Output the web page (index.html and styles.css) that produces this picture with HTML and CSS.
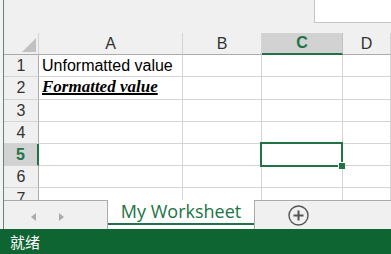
FILE: index.html
```html
<!DOCTYPE html>
<html lang="zh">
<head>
    <meta charset="UTF-8">
    <title>My Worksheet</title>
    <link rel="stylesheet" href="styles.css">
</head>
<body>
    <div class="app">
        <div class="main">
            <div class="edge"></div>
            <div class="content">
                <div class="ribbon">
                    <div class="namebox"></div>
                </div>

                <div class="sheet">
                    <div class="corner"><span class="tri"></span></div>
                    <div class="col-head">A</div>
                    <div class="col-head">B</div>
                    <div class="col-head active">C</div>
                    <div class="col-head">D</div>

                    <div class="row-head">1</div>
                    <div class="cell plain">Unformatted value</div>
                    <div class="cell"></div>
                    <div class="cell"></div>
                    <div class="cell"></div>

                    <div class="row-head">2</div>
                    <div class="cell fancy">Formatted value</div>
                    <div class="cell"></div>
                    <div class="cell"></div>
                    <div class="cell"></div>

                    <div class="row-head">3</div>
                    <div class="cell"></div>
                    <div class="cell"></div>
                    <div class="cell"></div>
                    <div class="cell"></div>

                    <div class="row-head">4</div>
                    <div class="cell"></div>
                    <div class="cell"></div>
                    <div class="cell"></div>
                    <div class="cell"></div>

                    <div class="row-head active">5</div>
                    <div class="cell"></div>
                    <div class="cell"></div>
                    <div class="cell"></div>
                    <div class="cell"></div>

                    <div class="row-head">6</div>
                    <div class="cell"></div>
                    <div class="cell"></div>
                    <div class="cell"></div>
                    <div class="cell"></div>

                    <div class="row-head">7</div>
                    <div class="cell"></div>
                    <div class="cell"></div>
                    <div class="cell"></div>
                    <div class="cell"></div>

                    <!-- active cell C5 -->
                    <div class="selection"><span class="handle"></span></div>
                </div>

                <div class="tabs">
                    <div class="nav">
                        <span class="arrow left"></span>
                        <span class="arrow right"></span>
                    </div>
                    <div class="tab"><span class="tab-label">My Worksheet</span></div>
                    <div class="add">
                        <svg width="21" height="21" viewBox="0 0 21 21">
                            <circle cx="10.5" cy="10.5" r="9.5" fill="none" stroke="#555" stroke-width="1.4"/>
                            <path d="M10.5 5.5 V15.5 M5.5 10.5 H15.5" stroke="#555" stroke-width="2"/>
                        </svg>
                    </div>
                </div>
            </div>
        </div>
        <div class="status">就绪</div>
    </div>
</body>
</html>
```

FILE: styles.css
```css
* { margin: 0; padding: 0; box-sizing: border-box; }
body {
    font-family: "Liberation Sans", Arial, sans-serif;
    background: #f0f0f0;
    width: 391px;
    height: 254px;
    overflow: hidden;
}
.app {
    display: flex;
    flex-direction: column;
    height: 254px;
}
.main {
    display: flex;
    height: 229px;
}
.edge {
    width: 4px;
    background: #f3f3f3;
    border-right: 1px solid #6d8275;
}
.content {
    flex: 1;
    display: flex;
    flex-direction: column;
    min-width: 0;
}
.ribbon {
    height: 33px;
    background: #f0f0f0;
    display: flex;
    justify-content: flex-end;
}
.namebox {
    width: 77px;
    height: 23px;
    background: #fff;
    border-left: 1px solid #c6c6c6;
    border-bottom: 1px solid #c6c6c6;
}

/* grid */
.sheet {
    position: relative;
    height: 167px;
    display: grid;
    grid-template-columns: 35px 144px 79px 81px 1fr;
    grid-template-rows: 22px 22px 23px 22px 22px 22px 22px 22px;
    background: #fff;
    overflow: hidden;
}
.corner {
    background: #f0f0f0;
    border-right: 1px solid #d4d4d4;
    border-bottom: 1px solid #ababab;
    position: relative;
}
.tri {
    position: absolute;
    right: 2px;
    bottom: 2px;
    width: 0;
    height: 0;
    border-left: 14px solid transparent;
    border-bottom: 14px solid #c1c1c1;
}
.col-head {
    background: #f0f0f0;
    border-right: 1px solid #d4d4d4;
    border-bottom: 1px solid #ababab;
    display: flex;
    align-items: center;
    justify-content: center;
    font-size: 16px;
    color: #333;
}
.col-head.active {
    background: #d2d2d2;
    color: #217346;
    font-weight: bold;
    border-bottom: 2px solid #217346;
    border-right-color: #c0c0c0;
}
.row-head {
    background: #f0f0f0;
    border-right: 1px solid #ababab;
    border-bottom: 1px solid #d4d4d4;
    display: flex;
    align-items: center;
    justify-content: center;
    font-size: 16px;
    color: #333;
}
.row-head.active {
    background: #d2d2d2;
    color: #217346;
    font-weight: bold;
    border-right: 2px solid #217346;
}
.cell {
    border-right: 1px solid #d4d4d4;
    border-bottom: 1px solid #d4d4d4;
    display: flex;
    align-items: flex-end;
    padding: 0 0 1px 3px;
    white-space: nowrap;
    font-size: 16px;
    line-height: 19px;
    color: #000;
}
.cell.fancy {
    font-family: "Liberation Serif", "Times New Roman", serif;
    font-size: 17px;
    font-weight: bold;
    font-style: italic;
    text-decoration: underline;
    text-decoration-thickness: 2px;
    padding-bottom: 3px;
}
.selection {
    position: absolute;
    left: 256px;
    top: 109px;
    width: 83px;
    height: 25px;
    border: 2px solid #217346;
}
.handle {
    position: absolute;
    right: -4px;
    bottom: -4px;
    width: 7px;
    height: 7px;
    background: #217346;
    border-left: 1px solid #fff;
    border-top: 1px solid #fff;
}

/* sheet tabs */
.tabs {
    flex: 1;
    display: flex;
    background: #f0f0f0;
    border-top: 1px solid #ababab;
}
.nav {
    width: 103px;
    display: flex;
    align-items: center;
    padding: 3px 0 0 27px;
    gap: 23px;
}
.arrow {
    width: 0;
    height: 0;
    border-top: 4px solid transparent;
    border-bottom: 4px solid transparent;
}
.arrow.left { border-right: 5px solid #ababab; }
.arrow.right { border-left: 5px solid #ababab; }
.tab {
    width: 148px;
    margin-top: -1px;
    background: #fff;
    border-left: 1px solid #ababab;
    border-right: 1px solid #ababab;
    padding-bottom: 4px;
}
.tab-label {
    display: block;
    height: 25px;
    border-bottom: 2px solid #217346;
    text-align: center;
    font-family: "Open Sans", sans-serif;
    font-size: 18px;
    line-height: 23px;
    color: #217346;
}
.add {
    margin-left: 33px;
    display: flex;
    align-items: center;
    padding-top: 1px;
}

.status {
    height: 25px;
    background: #0e6532;
    color: #fff;
    font-family: "Noto Sans CJK SC", sans-serif;
    font-size: 15px;
    line-height: 25px;
    padding-left: 10px;
}
```
